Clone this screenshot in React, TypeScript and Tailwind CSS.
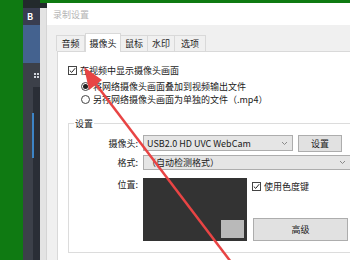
import React from "react"

const font = { fontFamily: '"Noto Sans CJK SC", "Noto Sans", sans-serif' }

function Chevron() {
  return (
    <svg width="7" height="5" viewBox="0 0 7 5" className="shrink-0">
      <path d="M1 1 L3.5 3.5 L6 1" fill="none" stroke="#8a8a8a" strokeWidth="1" />
    </svg>
  )
}

function CheckBox() {
  return (
    <div className="w-[9px] h-[9px] border border-[#444] bg-white flex items-center justify-center shrink-0">
      <svg width="7" height="7" viewBox="0 0 7 7">
        <path d="M0.8 3.6 L2.7 5.4 L6.2 1.2" fill="none" stroke="#222" strokeWidth="1" />
      </svg>
    </div>
  )
}

function Radio({ checked }: { checked?: boolean }) {
  return (
    <div className="w-[9px] h-[9px] rounded-full border border-[#444] bg-white flex items-center justify-center shrink-0">
      {checked && <div className="w-[5px] h-[5px] rounded-full bg-[#222]" />}
    </div>
  )
}

const tabs = [
  { name: "音频", w: "w-[29px]" },
  { name: "摄像头", w: "w-[36px]", active: true },
  { name: "鼠标", w: "w-[28px]" },
  { name: "水印", w: "w-[28px]" },
  { name: "选项", w: "w-[32px]" },
]

export default function App() {
  return (
    <div className="relative w-[350px] h-[260px] overflow-hidden bg-[#0f7a12] flex text-[9px] leading-[13px] text-[#1a1a1a]" style={font}>
      {/* left app strip */}
      <div className="w-[23px] shrink-0" />
      <div className="w-[17px] shrink-0 flex flex-col">
        <div className="h-[8px] bg-[#232a2c]" />
        <div className="h-[17px] bg-[#393d50] flex items-center pl-[4px] text-white text-[9px] font-bold">B</div>
        <div className="h-[38px] bg-[#44628f]" />
        <div className="flex-1 flex">
          <div className="w-[10px] bg-[#3c4049]" />
          <div className="flex-1 flex flex-col">
            <div className="h-[24px] bg-[#3c4049] flex items-center justify-center">
              <div className="grid grid-cols-2 gap-[1px]">
                <div className="w-[2px] h-[2px] bg-[#d0d4dc]" />
                <div className="w-[2px] h-[2px] bg-[#d0d4dc]" />
                <div className="w-[2px] h-[2px] bg-[#d0d4dc]" />
                <div className="w-[2px] h-[2px] bg-[#d0d4dc]" />
              </div>
            </div>
            <div className="flex-1 bg-[#2a2e36] pt-[26px]">
              <div className="w-[2px] h-[45px] bg-[#3d84c6] -ml-[1px]" />
            </div>
          </div>
        </div>
      </div>

      {/* dialog */}
      <div className="flex-1 mt-[3px] flex">
        <div className="w-[7px] shrink-0 flex flex-col">
          <div className="h-[5px] bg-[#232a2c]" />
          <div className="flex-1 bg-[#e3e3e3] border-r border-[#d4d4d4]" />
        </div>
        <div className="flex-1 flex flex-col bg-[#f0f0f0]">
          <div className="h-[22px] bg-white flex items-center pl-[6px] text-[#b4b4b4]">录制设置</div>
          <div className="flex-1 pl-[10px] flex flex-col">
            {/* tabs */}
            <div className="h-[26px] pt-[8px] flex items-end">
              {tabs.map((t) =>
                t.active ? (
                  <div key={t.name} className={`${t.w} h-[19px] bg-white border border-b-0 border-[#d9d9d9] flex items-center justify-center relative z-10 -mb-[1px]`}>
                    {t.name}
                  </div>
                ) : (
                  <div key={t.name} className={`${t.w} h-[16px] bg-[#f0f0f0] border border-b-0 border-[#d9d9d9] -ml-[1px] flex items-center justify-center`}>
                    {t.name}
                  </div>
                )
              )}
            </div>
            {/* panel */}
            <div className="flex-1 bg-white border-l border-t border-[#d9d9d9] pl-[10px]">
              <div className="mt-[12px] h-[13px] flex items-center gap-[3px]">
                <CheckBox />
                <span>在视频中显示摄像头画面</span>
              </div>
              <div className="pl-[13px]">
                <div className="mt-[3px] h-[13px] flex items-center gap-[3px]">
                  <Radio checked />
                  <span>将网络摄像头画面叠加到视频输出文件</span>
                </div>
                <div className="h-[13px] flex items-center gap-[3px]">
                  <Radio />
                  <span>另存网络摄像头画面为单独的文件（.mp4）</span>
                </div>
              </div>

              {/* group box */}
              <div className="relative mt-[17px] border border-r-0 border-[#dcdcdc] pt-[11px] pb-[11px]">
                <div className="absolute -top-[7px] left-[5px] bg-white px-[1px]">设置</div>
                <div className="flex items-center h-[16px]">
                  <div className="w-[71px] text-right pr-[2px]">摄像头:</div>
                  <div className="ml-[3px] w-[150px] h-[16px] bg-[#e5e5e5] border border-[#adadad] flex items-center justify-between pl-[3px] pr-[4px]">
                    <span>USB2.0 HD UVC WebCam</span>
                    <Chevron />
                  </div>
                  <div className="ml-[5px] w-[44px] h-[17px] bg-[#e1e1e1] border border-[#adadad] flex items-center justify-center">设置</div>
                </div>
                <div className="flex items-center h-[14px] mt-[4px]">
                  <div className="w-[71px] text-right pr-[2px]">格式:</div>
                  <div className="ml-[3px] w-[208px] shrink-0 h-[15px] bg-[#e5e5e5] border border-[#adadad] flex items-center justify-between pl-[3px] pr-[4px]">
                    <span>（自动检测格式）</span>
                    <Chevron />
                  </div>
                </div>
                <div className="flex mt-[9px]">
                  <div className="w-[71px] text-right pr-[2px]">位置:</div>
                  <div className="ml-[3px] w-[104px] h-[63px] bg-[#333333] flex items-end justify-end p-[3px]">
                    <div className="w-[23px] h-[18px] bg-[#b9b9b9]" />
                  </div>
                  <div className="ml-[5px] flex flex-col h-[63px]">
                    <div className="mt-[2px] h-[13px] flex items-center gap-[3px]">
                      <CheckBox />
                      <span>使用色度键</span>
                    </div>
                    <div className="mt-auto ml-[1px] w-[95px] h-[23px] bg-[#e1e1e1] border border-[#adadad] flex items-center justify-center">高级</div>
                  </div>
                </div>
              </div>
            </div>
          </div>
        </div>
      </div>

      {/* red annotation arrow */}
      <svg className="absolute inset-0 pointer-events-none" width="350" height="260" viewBox="0 0 350 260">
        <line x1="95" y1="83" x2="231" y2="262" stroke="#e84444" strokeWidth="2.5" />
        <polygon points="84,67 102,80 89,90" fill="#e84444" />
      </svg>
    </div>
  )
}
